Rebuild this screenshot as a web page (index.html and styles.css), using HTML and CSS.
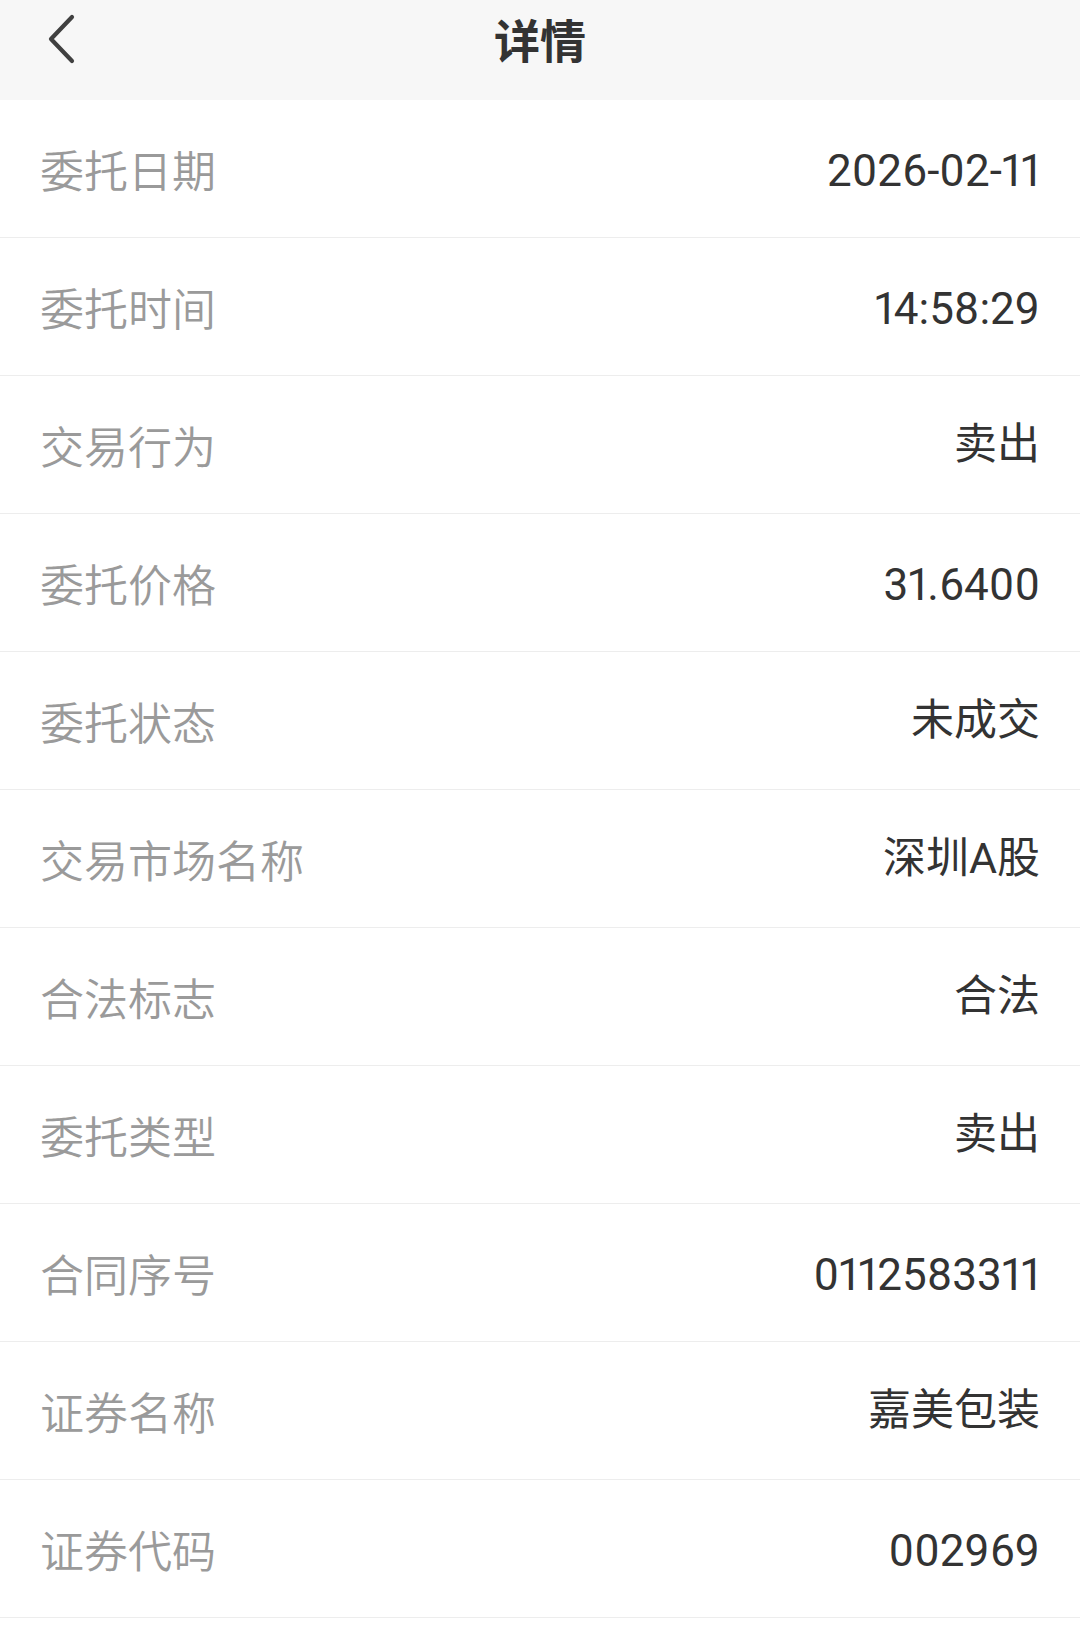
FILE: index.html
```html
<!DOCTYPE html>
<html lang="zh-CN">
<head>
<meta charset="utf-8">
<title>详情</title>
<link rel="stylesheet" href="styles.css">
</head>
<body>
<header class="nav">
  <div class="nav-left">
    <svg class="back" width="32" height="50" viewBox="0 0 32 50">
      <path d="M26 3 L5 25 L26 47" fill="none" stroke="#404040" stroke-width="4.2" stroke-linecap="round" stroke-linejoin="round"/>
    </svg>
  </div>
  <h1 class="title">详情</h1>
  <div class="nav-right"></div>
</header>
<main class="list">
  <div class="row"><span class="label">委托日期</span><span class="value num">2026-02-11</span></div>
  <div class="row"><span class="label">委托时间</span><span class="value num">14:58:29</span></div>
  <div class="row"><span class="label">交易行为</span><span class="value">卖出</span></div>
  <div class="row"><span class="label">委托价格</span><span class="value num">31.6400</span></div>
  <div class="row"><span class="label">委托状态</span><span class="value">未成交</span></div>
  <div class="row"><span class="label">交易市场名称</span><span class="value">深圳A股</span></div>
  <div class="row"><span class="label">合法标志</span><span class="value">合法</span></div>
  <div class="row"><span class="label">委托类型</span><span class="value">卖出</span></div>
  <div class="row"><span class="label">合同序号</span><span class="value num">0112583311</span></div>
  <div class="row"><span class="label">证券名称</span><span class="value">嘉美包装</span></div>
  <div class="row"><span class="label">证券代码</span><span class="value num">002969</span></div>
</main>
</body>
</html>
```

FILE: styles.css
```css
html, body {
  margin: 0;
  padding: 0;
  background: #ffffff;
}
body {
  width: 1080px;
  min-height: 1652px;
  font-family: Roboto, "Noto Sans CJK SC", sans-serif;
}
.nav {
  height: 100px;
  background: #f7f7f7;
  display: grid;
  grid-template-columns: 1fr auto 1fr;
  align-items: center;
}
.nav-left {
  padding-left: 46px;
  display: flex;
  align-items: center;
  height: 100%;
  padding-bottom: 22px;
  box-sizing: border-box;
}
.back {
  display: block;
}
.title {
  margin: 0;
  font-family: "Noto Sans CJK SC", sans-serif;
  font-weight: 700;
  font-size: 46px;
  line-height: 1;
  color: #333333;
  padding-bottom: 24px;
}
.list {
  display: flex;
  flex-direction: column;
}
.row {
  height: 137px;
  border-bottom: 1px solid #ededed;
  display: flex;
  justify-content: space-between;
  align-items: center;
  padding: 0 40px 0 40px;
}
.label {
  font-family: "Noto Sans CJK SC", sans-serif;
  font-size: 44px;
  font-weight: 350;
  color: #9a9a9a;
  line-height: 1;
}
.value {
  font-family: Roboto, "Noto Sans CJK SC", sans-serif;
  font-size: 43px;
  color: #333333;
  line-height: 1;
}
.value.num {
  font-size: 44px;
  font-variant-numeric: proportional-nums;
  letter-spacing: 0;
  padding-top: 5px;
}
```
